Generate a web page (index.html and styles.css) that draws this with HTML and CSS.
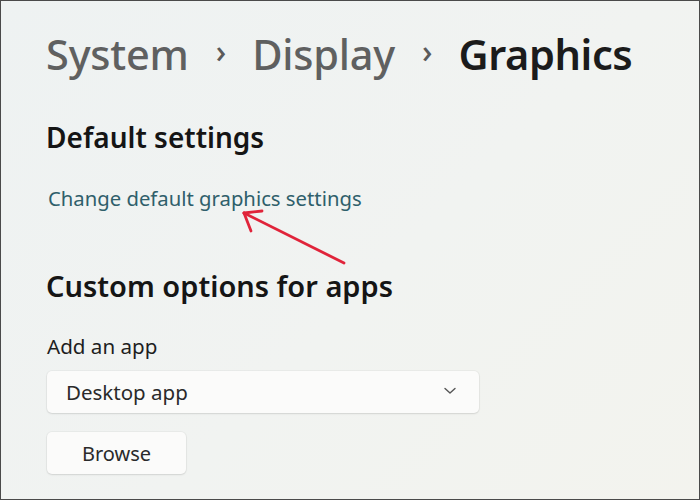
FILE: index.html
```html
<!DOCTYPE html>
<html lang="en">
<head>
<meta charset="utf-8">
<title>Graphics</title>
<link rel="stylesheet" href="styles.css">
</head>
<body>
<div class="page">
  <nav class="crumbs">
    <span class="crumb">System</span>
    <span class="sep">›</span>
    <span class="crumb">Display</span>
    <span class="sep">›</span>
    <span class="crumb current">Graphics</span>
  </nav>

  <section class="section">
    <h2 class="heading">Default settings</h2>
    <a class="link" href="#">Change default graphics settings</a>
  </section>

  <section class="section custom">
    <h2 class="heading">Custom options for apps</h2>
    <div class="label">Add an app</div>
    <div class="select">
      <span>Desktop app</span>
      <svg class="chev" width="12" height="8" viewBox="0 0 12 8"><path d="M1 1.5 L6 6 L11 1.5" fill="none" stroke="#555" stroke-width="1.4" stroke-linecap="round" stroke-linejoin="round"/></svg>
    </div>
    <button class="btn">Browse</button>
  </section>

  <svg class="arrow" width="700" height="500" viewBox="0 0 700 500">
    <g stroke="#e0243a" stroke-width="2.8" stroke-linecap="round" stroke-linejoin="round" fill="none">
      <path d="M344 263 L244 213"/>
      <path d="M244 213 L262 211"/>
      <path d="M244 213 L251 231"/>
    </g>
  </svg>
</div>
</body>
</html>
```

FILE: styles.css
```css
html, body {
  margin: 0;
  padding: 0;
}
body {
  width: 700px;
  height: 500px;
  overflow: hidden;
  font-family: "Noto Sans", "Open Sans", sans-serif;
}
.page {
  position: relative;
  box-sizing: border-box;
  width: 700px;
  height: 500px;
  border: 1px solid #4a4a4a;
  background: linear-gradient(135deg, #eef2f2 0%, #f1f3f1 55%, #f3f3ee 100%);
  padding: 25px 0 0 45px;
  display: flex;
  flex-direction: column;
}
.crumbs {
  display: flex;
  align-items: center;
  font-size: 41.5px;
  font-weight: 500;
  line-height: 56px;
  color: #5f6060;
}
.crumb { letter-spacing: -0.2px; }
.sep {
  font-size: 32px;
  margin: 0 26px 0 27px;
  color: #5a5a5a;
  position: relative;
  top: -3px;
}
.current { color: #1b1b1b; font-weight: 600; letter-spacing: -0.4px; }
.section {
  display: flex;
  flex-direction: column;
  align-items: flex-start;
}
.heading {
  margin: 0;
  font-size: 28px;
  font-weight: 600;
  color: #151515;
  line-height: 34px;
}
.section:first-of-type .heading { margin-top: 38px; }
.link {
  margin-top: 31px;
  margin-left: 2px;
  font-size: 20.3px;
  color: #2f5f6b;
  text-decoration: none;
  line-height: 26px;
}
.custom { margin-top: 58px; }
.custom .heading { font-size: 29px; }
.label {
  margin-top: 30px;
  margin-left: 1px;
  font-size: 20.6px;
  color: #1e1e1e;
  line-height: 26px;
}
.select {
  margin-top: 12px;
  margin-left: 1px;
  box-sizing: border-box;
  width: 432px;
  height: 42px;
  background: #fbfbfa;
  border-radius: 5px;
  box-shadow: 0 1px 2px rgba(0,0,0,0.10), 0 0 0 1px rgba(0,0,0,0.03);
  display: flex;
  align-items: center;
  justify-content: space-between;
  padding: 0 23px 0 19px;
  font-size: 20.5px;
  color: #2a2a2a;
}
.chev { margin-top: -3px; }
.btn {
  margin-top: 19px;
  margin-left: 1px;
  width: 139px;
  height: 42px;
  border: none;
  border-radius: 5px;
  background: #fbfbfa;
  box-shadow: 0 1px 2px rgba(0,0,0,0.10), 0 0 0 1px rgba(0,0,0,0.03);
  font-family: "Noto Sans", "Open Sans", sans-serif;
  font-size: 20px;
  color: #2a2a2a;
  padding: 0;
}
.arrow {
  position: absolute;
  left: -1px;
  top: -1px;
  pointer-events: none;
}
```
